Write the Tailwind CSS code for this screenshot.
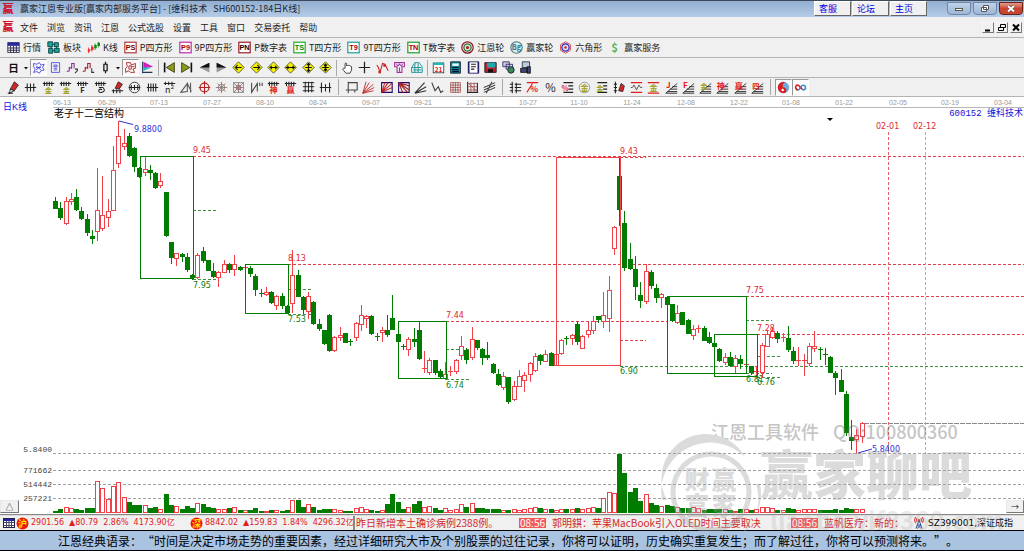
<!DOCTYPE html>
<html lang="zh-CN">

<head>
    <meta charset="UTF-8">
    <meta name="viewport" content="width=device-width, initial-scale=1.0">
    <title>赢家江恩专业版</title>
    <script src="https://cdn.jsdelivr.net/npm/@tailwindcss/browser@4"></script>
</head>

<body class="min-h-screen flex flex-col bg-[#f0f0f0] text-[9px] leading-none text-[#222] font-['Noto_Sans_CJK_SC',sans-serif] overflow-x-hidden [text-spacing-trim:space-all]">

    <!-- Title bar -->
    <header class="flex items-start h-[17px] pl-[2px] border-t border-[#3c4a5c] bg-linear-to-b from-[#92aed0] to-[#b4cce6]">
        <svg class="w-3 h-3 mt-[2px]" viewBox="0 0 12 12"><text x="6" y="10" font-size="11" font-weight="900" text-anchor="middle" fill="#d0102c">赢</text></svg>
        <h1 class="ml-[6px] leading-[15px] whitespace-pre text-[#1a2430]">赢家江恩专业版[赢家内部服务平台] - [维科技术   SH600152-184日K线]</h1>
        <nav class="ml-auto flex gap-px text-[#0000e0]">
            <a href="#" class="w-[37px] h-[15px] pl-1 leading-[13px] bg-[#f0f0f0] border border-white border-r-[#666] border-b-[#666]">客服</a>
            <a href="#" class="w-[37px] h-[15px] pl-1 leading-[13px] bg-[#f0f0f0] border border-white border-r-[#666] border-b-[#666]">论坛</a>
            <a href="#" class="w-[37px] h-[15px] pl-1 leading-[13px] bg-[#f0f0f0] border border-white border-r-[#666] border-b-[#666]">主页</a>
        </nav>
        <div class="ml-5 mr-px mt-px flex gap-[2px]">
            <button aria-label="最小化" class="w-6 h-[13px] flex items-center justify-center rounded-b border border-[#6f86a5] bg-linear-to-b from-[#bfd2e8] to-[#9db7d6]">
                <svg class="w-[10px] h-2" viewBox="0 0 10 8"><rect x="1.5" y="3.5" width="7" height="2" fill="#fff" stroke="#555" /></svg>
            </button>
            <button aria-label="还原" class="w-6 h-[13px] flex items-center justify-center rounded-b border border-[#6f86a5] bg-linear-to-b from-[#bfd2e8] to-[#9db7d6]">
                <svg class="w-[10px] h-[10px]" viewBox="0 0 10 10"><path d="M3.5 1.5h5v4h-5zM1.500 3.500h5v4h-5z" fill="#fff" stroke="#555" /></svg>
            </button>
            <button aria-label="关闭" class="w-6 h-[13px] flex items-center justify-center rounded-b border border-[#6b2019] bg-linear-to-b from-[#e09a8c] via-[#c8452f] to-[#c8452f]">
                <svg class="w-[10px] h-[10px]" viewBox="0 0 10 10"><path d="M2 2l6 5.500M8 2L2 7.500" stroke="#633" stroke-width="3" /><path d="M2 2l6 5.500M8 2L2 7.500" stroke="#fff" stroke-width="2" /></svg>
            </button>
        </div>
    </header>

    <!-- Menu -->
    <nav class="flex items-center h-[21px] pl-[2px] pr-[2px] border-b border-[#b4b4b4]">
        <svg class="w-3 h-3 mr-[6px]" viewBox="0 0 12 12"><text x="6" y="10" font-size="11" font-weight="900" text-anchor="middle" fill="#d0102c">赢</text></svg>
        <div class="flex gap-[9px]">
            <a href="#">文件</a><a href="#">浏览</a><a href="#">资讯</a><a href="#">江恩</a><a href="#">公式选股</a><a href="#">设置</a><a href="#">工具</a><a href="#">窗口</a><a href="#">交易委托</a><a href="#">帮助</a>
        </div>
        <div class="ml-auto flex gap-[2px]">
            <button aria-label="最小化窗口" class="w-3 h-[11px] border border-[#f8f8f8] border-r-[#777] border-b-[#777]"><svg class="w-full h-full" viewBox="0 0 10 9"><path d="M2 7.500h5" stroke="#000" stroke-width="2" /></svg></button>
            <button aria-label="还原窗口" class="w-3 h-[11px] border border-[#f8f8f8] border-r-[#777] border-b-[#777]"><svg class="w-full h-full" viewBox="0 0 10 9"><path d="M3.500 1.500h5v3h-5zM1.500 4.500h5v3h-5z" fill="#eee" stroke="#000" /></svg></button>
            <button aria-label="关闭窗口" class="w-3 h-[11px] border border-[#f8f8f8] border-r-[#777] border-b-[#777]"><svg class="w-full h-full" viewBox="0 0 10 9"><path d="M2 1.500l6 6M8 1.500l-6 6" stroke="#000" stroke-width="2" /></svg></button>
        </div>
    </nav>

    <!-- Toolbars, filled from the lists in the script -->
    <div id="bar-main" class="flex items-center gap-[6px] h-5 pl-[7px] border-b border-[#b4b4b4]"></div>
    <div id="bar-view" class="flex items-center h-5 pl-[5px] border-b border-[#b4b4b4]"></div>
    <div id="bar-draw" class="flex items-center h-[19px] pl-[5px] border-b border-[#b4b4b4]"></div>

    <main class="relative">
        <svg id="chart" class="block w-full bg-white" viewBox="0 97 1024 419"></svg>
        <button aria-label="展开" class="absolute left-0 bottom-[3px] w-[19px] h-[13px] bg-[#f0f0f0] border border-[#e8e8e8] border-r-[#777] border-b-[#777] text-[8px]">△</button>
        <button aria-label="向右" class="absolute right-0 bottom-[3px] w-[18px] h-[13px] bg-[#f0f0f0] border border-[#e8e8e8] border-r-[#777] border-b-[#777] text-[8px]">→</button>
    </main>

    <!-- Index quotes and news -->
    <section class="relative flex items-center h-[14px] pl-[3px] whitespace-nowrap overflow-hidden">
        <svg class="w-3 h-3" viewBox="0 0 12 12"><rect x=".5" y="1.500" width="11" height="9" fill="#fff" stroke="#224" /><path d="M1 3h10" stroke="#22a" stroke-width="2" /><path d="M1 5.500h10M1 8.500h10M3.500 4v6M6 4v6M8.500 4v6" stroke="#446" /></svg>
        <svg class="w-[13px] h-[13px] ml-px" viewBox="0 0 13 13"><circle cx="6.500" cy="6.500" r="6" fill="#f01808" /><text x="6.500" y="10" text-anchor="middle" font-size="9" font-weight="bold" fill="#ffe000">沪</text></svg>
        <p class="flex gap-[5px] ml-[2px] w-[159px] leading-[12px] text-[8px] text-[#e02020] font-['DejaVu_Sans','Noto_Sans_CJK_SC',sans-serif]">
            <span>2901.56</span><span>▲80.79</span><span>2.86%</span><span>4173.90亿</span>
        </p>
        <svg class="w-[13px] h-[13px]" viewBox="0 0 13 13"><circle cx="6.500" cy="6.500" r="6" fill="#f01808" /><text x="6.500" y="10" text-anchor="middle" font-size="9" font-weight="bold" fill="#ffe000">深</text></svg>
        <p class="flex gap-[5px] ml-[2px] w-[148px] leading-[12px] overflow-hidden text-[8px] text-[#e02020] font-['DejaVu_Sans','Noto_Sans_CJK_SC',sans-serif]">
            <span>8842.02</span><span>▲159.83</span><span>1.84%</span><span>4296.32亿</span>
        </p>
        <div class="flex items-center flex-1 h-full border-l-2 border-[#888] pl-px text-[10px] text-[#d02828]">
            <span class="w-[163px]">昨日新增本土确诊病例2388例。</span>
            <time class="px-px bg-[#f05a5a] text-white">08:56</time>
            <span class="ml-[6px] w-[239px]">郭明錤：苹果MacBook引入OLED时间主要取决</span>
            <time class="px-px bg-[#f05a5a] text-white">08:56</time>
            <span class="ml-[6px]">蓝帆医疗：新的：</span>
        </div>
        <div class="flex items-center gap-1 w-[114px] pl-1 h-full bg-[#f0f0f0]/60 text-[9px] text-black font-['DejaVu_Sans','Noto_Sans_CJK_SC',sans-serif]">
            <svg class="w-[10px] h-3" viewBox="0 0 10 12" fill="none"><path d="M5 3L2 11.500M5 3l3 8.500M3 8h4l-4 3.500M7 11.500L3.500 8" stroke="#224a9a" /><circle cx="5" cy="3" r="1" fill="#e02020" /><path d="M3 1Q2 3 3 5M7 1q1 2 0 4M1.500 0Q-.5 3 1.500 6M8.500 0q2 3 0 6" stroke="#e02020" /></svg>
            <span>SZ399001,深证成指</span>
        </div>
    </section>

    <footer class="h-[21px] border-y border-black bg-[#a9c3e0] pl-[58px] leading-[19px] text-[12px] text-black whitespace-nowrap">江恩经典语录：“时间是决定市场走势的重要因素，经过详细研究大市及个别股票的过往记录，你将可以证明，历史确实重复发生；而了解过往，你将可以预测将来。”。</footer>

    <!-- Watermark over chart and quotes -->
    <svg class="absolute top-0 left-0 w-full pointer-events-none" viewBox="0 0 1024 531" opacity=".4" fill="#a8a8a8">
        <text x="711" y="439" font-size="18" font-weight="500" fill="#707070">江恩工具软件</text>
        <text x="833" y="439" font-size="18" font-weight="500" fill="#707070">QQ:100800360</text>
        <circle cx="711" cy="492" r="38" fill="none" stroke="#a8a8a8" stroke-width="5" />
        <path d="M662 500A49 49 0 0 1 745 457A44 44 0 0 0 667 500zM760 484A49 49 0 0 1 676 527A46 46 0 0 0 756 484z" />
        <g font-size="25" font-weight="900" text-anchor="middle"><text x="697" y="489">财</text><text x="724" y="489">赢</text><text x="697" y="515">富</text><text x="724" y="515">家</text></g>
        <text x="760" y="495" font-size="53" font-weight="900">赢家聊吧</text>
        <text x="770" y="530" font-size="25" font-weight="bold" opacity=".6">liaoba.yjf8360.com</text>
    </svg>

    <script>
        // Each icon is drawn in a 16x16 box
        const box = (t, frame, ink) => `<rect x="1" y="1.500" width="14" height="13" fill="#fff" stroke="${frame}" stroke-width="1.500"/><text x="8" y="11.500" font-size="9" font-weight="bold" text-anchor="middle" font-family="Liberation Sans" fill="${ink}">${t}</text>`;
        const line = (d, c = '#222', w = 1.3) => `<path d="${d}" fill="none" stroke="${c}" stroke-width="${w}"/>`;
        const shape = (d, c, s = 'none') => `<path d="${d}" fill="${c}" stroke="${s}"/>`;
        const glyph = (t, c, x = 8, y = 14, s = 11) => `<text x="${x}" y="${y}" font-size="${s}" font-weight="bold" text-anchor="middle" fill="${c}">${t}</text>`;
        const comb = line('M1 3h14M3 1v5M6 1v5M9 1v5M12 1v5');
        const fan = line('M1 15h14M1 15L15 3M3 13h12M6 10h9M9 7h6', '#333', 1.2);
        const diamond = (d) => shape('M8 1l7 7-7 7-7-7z', '#f4f000', '#444') + line(d, '#111', 1.3);

        const icons = {
            grid: '<rect x="1" y="2" width="14" height="12" fill="#fff" stroke="#223"/>' + shape('M1 2h14v4H1z', '#2828a0') + line('M1 8.500h14M1 11.500h14M4.500 6v8M8 6v8M11.500 6v8', '#335'),
            blocks: shape('M1 1h6v6H1zM9 2h5v5H9zM2 9h5v6H2zM9 9h6v5H9z', '#18a8a0', '#033') + line('M7 4h3M5 7v3M12 7v3M7 12h3', '#044'),
            kline: line('M2 8v7M6 5v8', '#d22', 1) + line('M10 3v8M14 1v7', '#181', 1) + shape('M1 10h3v3H1zM5 7h3v4H5z', '#f22') + shape('M9 5h3v4H9zM13 2h3v4h-3z', '#181'),
            ps: box('PS', '#b04040', '#800'), p9: box('P9', '#c030b0', '#a00'), pn: box('PN', '#a02030', '#200'),
            ts: box('TS', '#20b030', '#080'), t9: box('T9', '#20a098', '#a00'), tn: box('TN', '#20a030', '#a00'),
            wheel: '<circle cx="8" cy="8" r="7" fill="#fff" stroke="#812" stroke-width="1.500"/><circle cx="8" cy="8" r="4.500" fill="#cec" stroke="#363" stroke-width="1.500"/><circle cx="8" cy="8" r="2" fill="#a23"/>',
            bigwheel: '<circle cx="8" cy="8" r="7" fill="#dfeee8" stroke="#477" stroke-width="1.300"/>' + glyph('Bg', '#287898', 8, 11, 9),
            hex: shape('M8 1l6 3.500v7L8 15l-6-3.500v-7z', '#fff', '#c22') + '<circle cx="8" cy="8" r="4.500" fill="#dde" stroke="#22b" stroke-width="1.500"/><circle cx="8" cy="8" r="1.500" fill="#c22"/>',
            dollar: glyph('$', '#58b458', 8, 13, 14),
            day: glyph('日', '#111', 8, 13, 13),
            drop: shape('M4 6h8l-4 5z', '#111'),
            web: line('M2 3l4 1 3-2 2 3 4-1-2 4 2 3-4 1-2 3-3-2-4 1 2-4-2-3zM5 6l6 5M11 6l-6 5M5 8h6', '#4848e0', 1.1),
            cup: line('M3 2h10v12H3zM6 5h4v2H6zM6 9h4M6 11h4', '#5050e0', 1.1),
            steps: line('M1 13l3-1V8l3 1V3h3v6', '#823090') + line('M11 10h3v2l-3 3', '#333'),
            steps2: line('M1 13l3-1V8l3 1V3h3v6', '#a02030') + line('M12 9v5h3', '#333'),
            candle: line('M8 1v3M8 12v3M6 4h4v8H6z', '#111', 1.500),
            face: line('M3 2h5l1 3 5-2v6l-3 1 2 4H8l-2-2-4 2V9l2-2zM6 6h3v4H6zM10 7h3', '#b02020', 1.1),
            flag: shape('M3 1l12 6-12 2z', '#d020c0') + shape('M3 8h10l-10 4z', '#20b8c0') + line('M2 1v14M2 14h12', '#235'),
            first: line('M2 2v12', '#111', 2) + shape('M14 2v12L4 8z', '#8a9a20', '#330'),
            last: line('M14 2v12', '#111', 2) + shape('M2 2v12l10-6z', '#8a9a20', '#330'),
            prev: shape('M14 2v12L2 8z', '#999') + shape('M14 2v6H2z', '#111'),
            next: shape('M2 2v12l12-6z', '#999') + shape('M2 2v6h12z', '#111'),
            d1: diamond('M4 8h8M7 5L4 8l3 3'), d2: diamond('M4 8h8M9 5l3 3-3 3'), d3: diamond('M3 8h10M6 6L4 8l2 2M10 6l2 2-2 2'),
            d4: diamond('M2 8h12M4 6l2 2-2 2M12 6l-2 2 2 2'), d5: diamond('M8 3v10M4 8h8M6 5l2-2 2 2M6 11l2 2 2-2'), d6: diamond('M8 3v10M4 8h8M6 4l2 3 2-3M6 12l2-3 2 3'),
            hand: shape('M5 9V3q1-1 2 0v3l1-1 1 1 1-1 1 1 2 1v4l-2 4H6L2 10q1-2 3-1z', '#fff', '#222'),
            plus: line('M8 1v14M1 8h14', '#222', 1.500),
            curve: line('M1 5l2 3 2 6 3-11 3 1 4 8', '#d02020', 1.300) + shape('M3 12h3v3H3zM9 4h3v3H9z', '#d02020'),
            shirt: line('M2 2h12v5h-3v7H5V7H2zM4 4l2 2 2-2 2 2 2-2M8 8v5', '#a030a0', 1.300),
            net: line('M2 8l4-6h5l4 5v7H2zM2 8h12M6 2v12M10 3v11M4 11h10', '#209898', 1.200),
            calendar: '<rect x="1.500" y="2.500" width="13" height="12" fill="#fff" stroke="#333"/>' + shape('M2 2h12v3H2z', '#20b8b8') + glyph('21', '#d22', 8, 13, 8),
            calc: shape('M2 1h12v14H2z', '#188898', '#012') + shape('M4 3h8v3H4z', '#dff') + line('M4 8h8M4 10.500h8M4 13h8', '#013', 1.500),
            list: shape('M2 1h12v14H2z', '#fff', '#115') + line('M2 1v14M14 1v14', '#226', 2) + line('M5 4h6M5 7h6M5 10h4'),
            floppy: shape('M1 2h14v12H1z', '#c02030', '#111') + shape('M4 2h10v6H4z', '#20a8b0') + shape('M5 10h6v4H5z', '#111'),
            globe: shape('M1 1h8v6H1zM5 4h8v6H5z', '#ccd', '#226') + '<circle cx="11" cy="11" r="4" fill="#3a8a50" stroke="#114"/>',
            pc: shape('M4 1h9v7H4z', '#bcd', '#224') + shape('M2 9h8v5H2zM10 7h4v8h-4z', '#447', '#111'),
            pen: shape('M4 10l5-9 5 4-5 7z', '#d02828', '#222') + shape('M4 10l5 2-6 3z', '#ddd', '#222') + line('M1 15h6', '#222', 1.5),
            vbars: line('M1 8h14M4 3v10M8 3v10M12 3v10'),
            gold: comb + glyph('金', '#a0a020', 8, 15, 9), gold2: comb + glyph('金', '#a0a020', 9, 15, 9),
            combF: comb + glyph('F', '#222', 8, 15, 9), combS: comb + line('M6 8h5q4 4-1 6-5 1-4-3 2-2 4 0'),
            pen2: shape('M5 9l4-8 5 3-4 6z', '#d02828', '#222') + line('M1 12h14M3 10v5M7 10v5M11 10v5'),
            ring: '<circle cx="8" cy="8" r="6.500" fill="none" stroke="#222"/>' + line('M1 8h14M4 5v6M8 5v6M12 5v6'),
            four: line('M1 8h14M3 3v10M6 3v10M9 3v10M12 3v10'),
            n2: line('M1 3h14M3 1v4M7 1v4M11 1v4') + '<text x="8" y="15" font-size="11" text-anchor="middle" fill="#222">n²</text>',
            tri: line('M1 14L9 3v10zM9 3l5 10M13 2v12', '#555'),
            cross: '<circle cx="8" cy="8" r="5.500" fill="none" stroke="#b22020" stroke-width="1.500"/>' + line('M8 0v16M1 8h14', '#b22020'),
            burst: line('M8 1v14M1 8h14M3 3l10 10M13 3L3 13', '#777', 1) + '<circle cx="8" cy="8" r="4" fill="none" stroke="#a66"/>',
            boxburst: line('M2 2h12v12H2zM8 2v12M2 8h12M2 2l12 12M14 2L2 14', '#777', 1) + '<circle cx="8" cy="8" r="3" fill="none" stroke="#b44"/>',
            nn: line('M2 2v12L9 3v10M12 2v4M15 2v4', '#444'),
            shen: comb + glyph('神', '#e02020', 8, 15, 10), ying: comb + glyph('赢', '#e02020', 8, 15, 10),
            ladder: line('M1 2h14M1 7h14M1 12h14M4 1v13M8 1v13M12 1v13', '#222', 1.200),
            hbar: line('M1 8h14M3 2v12M8 4v9M13 2v12'),
            rect: line('M4 2h11v9H4M4 1v14M1 11h5M12 11v3', '#444'),
            rays: line('M1 15L5 1M1 15L9 2M1 15L14 4M1 15l14-7M1 15l13-3', '#c02828', 1.1),
            boxrays: line('M2 2h13v12H2z', '#206') + line('M2 14L6 2M2 14l8-12M2 14L15 3M2 14l13-6', '#c02828'),
            boxrays2: line('M2 2h13v12H2z', '#206') + line('M2 2l13 4M2 2l13 9M2 2l11 12M2 2l5 12', '#a02828', 1.500),
            lines: line('M1 15L13 2M1 15L15 7M1 15l14-3', '#333'),
            vee: line('M1 2l4 10 4-5 3 7 3-2', '#333'),
            mesh: line('M2 2h12v12H2zM5 2v12M8 2v12M11 2v12M2 5h12M2 8h12M2 11h12', '#a05050', 1),
            mesh2: line('M2 1v14M14 2v12M2 14h13', '#222') + line('M2 3h12M2 7h12M2 11h12M6 2v12M10 2v12M3 3l11 10', '#a05050', 1),
            para: line('M1 8l14-6M1 11l14-6M1 14l14-6M4 15l7-14', '#444'),
            rows: line('M4 1v14M9 2v13M1 4h4M7 4h8M1 8h4M7 8h8M1 12h4M7 12h8', '#222', 1.300),
            pctline: line('M1 2h14M1 14L8 3', '#e02020') + glyph('%', '#e02020', 10, 14, 10),
            pct: '<text x="8" y="13" font-size="14" text-anchor="middle" fill="#222">%</text>',
            pctrows: line('M3 2h12M9 6h6M9 10h6M3 14h12') + glyph('%', '#e02020', 5, 12, 9),
            goldring: '<circle cx="8" cy="8" r="6.500" fill="none" stroke="#888"/>' + glyph('金', '#a0a020', 8, 12, 10),
            goldrows: line('M3 2h12M10 6h5M10 10h5M3 14h12') + glyph('金', '#a0a020', 6, 12, 9),
            penbar: line('M3 1v14M1 4h4M1 8h4M1 12h4') + shape('M7 12l3-9 4 3-2 7z', '#d02828', '#222'),
            wave: line('M1 2h14M1 14h14', '#e02020', 1.300) + line('M1 8h2l2-3 3 6 3-6 2 3h2', '#444', 1.1),
            goldbars: line('M1 2h14M1 15h14', '#e02020', 1.500) + glyph('金', '#a0a020', 8, 12, 10),
            fanJ: fan + glyph('J', '#e02020', 4, 9, 10), fanF: fan + glyph('F', '#e02020', 4, 9, 10), fanG: fan + glyph('金', '#a0a020', 6, 10, 9),
            fanS: fan + glyph('神', '#e02020', 6, 10, 10), fanY: fan + glyph('赢', '#e02020', 6, 10, 10), fan4: fan + glyph('四', '#e02020', 6, 10, 9),
            yin: '<circle cx="8" cy="8" r="7" fill="#70a8e0"/>' + shape('M8 1a7 7 0 0 0 0 14 3.500 3.500 0 0 0 0-7 3.500 3.500 0 0 1 3-6z', '#d82020') + '<circle cx="7" cy="11" r="1.500" fill="#fff"/>',
            inf: line('M8 8C6 5 4 4 2.500 6S3 11 5 11', '#d02020', 2) + line('M8 8c2-3 5-4 6-1s-2 5-4 3', '#4888c8', 2) + line('M5 11c1 0 2-1 3-3', '#4888c8', 2) + line('M8 8l2 2', '#d02020', 2)
        };
        const svg = (name, cls) => `<svg class="${cls}" viewBox="0 0 16 16">${icons[name]}</svg>`;

        const mainItems = [['grid', '行情'], ['blocks', '板块'], ['kline', 'K线'], ['ps', 'P四方形'], ['p9', '9P四方形'], ['pn', 'P数字表'], ['ts', 'T四方形'],
        ['t9', '9T四方形'], ['tn', 'T数字表'], ['wheel', '江恩轮'], ['bigwheel', '赢家轮'], ['hex', '六角形'], ['dollar', '赢家服务']];
        document.getElementById('bar-main').innerHTML = mainItems.map(([icon, label]) =>
            `<button class="flex items-center gap-[3px] whitespace-nowrap">${svg(icon, 'w-[13px] h-[13px]')}${label}</button>`).join('');

        // A group is a fixed run of tool buttons; '*' marks a pressed one
        const group = (names, cls) => `<div class="flex items-center justify-between ${cls}">` + names.split(' ').map(n => {
            const on = n[0] === '*';
            const name = on ? n.slice(1) : n;
            return `<button aria-label="${name}" class="flex items-center justify-center h-[17px] ${on ? 'w-[17px] bg-[#fafafa] border border-[#999] border-r-white border-b-white' : name === 'drop' ? 'w-2' : 'w-[17px]'}">${svg(name, name === 'drop' ? 'w-2 h-2' : 'w-[13px] h-[13px]')}</button>`;
        }).join('') + '</div>';
        const sep = '<span class="w-px h-4 mx-[3px] bg-[#a8a8a8]"></span>';
        const thinSep = '<span class="w-px h-4 mx-[2px] bg-[#a8a8a8]"></span>';
        const wideSep = '<span class="w-px h-4 mx-1 bg-[#a8a8a8]"></span>';

        document.getElementById('bar-view').innerHTML =
            group('day drop *web cup steps steps2 candle drop *face flag', 'w-[151px]') + thinSep +
            group('first last prev next d1 d2 d3 d4 d5 d6', 'w-[173px]') + thinSep +
            group('hand plus curve shirt net', 'w-[86px]') + thinSep +
            group('calendar calc list floppy globe pc', 'w-[104px]');
        document.getElementById('bar-draw').innerHTML =
            group('pen vbars gold gold2 combF combS pen2 ring four n2 tri cross burst boxburst nn shen ying ladder hbar', 'w-[329px]') + wideSep +
            group('rect rays boxrays boxrays2 lines vee mesh mesh2 para', 'w-[155px]') + wideSep +
            group('rows pctline pct pctrows goldring goldrows penbar wave goldbars fanJ fanF fanG fanS fanY fan4', 'w-[259px]') + wideSep +
            group('*yin *inf', 'w-[34px]');

        // Candles: direction, high, body top, body bottom, low
        const candles = `g197,201,208,208 g202,208,217,219 r197,201,223,224 r193,199,201,204 g189,197,209,210 g207,211,218,219 g214,219,232,235 g230,236,238,243
            r168,210,231,240 r176,215,228,230 r199,211,217,226 r146,170,210,210 r121,136,163,167 r129,143,146,149 g133,136,155,156 g147,148,166,171
            g167,168,176,177 r157,169,172,175 g165,170,172,179 g172,173,187,188 r173,181,185,187 g192,192,235,236 g242,242,257,263 r253,253,258,265
            g253,254,256,261 g253,257,269,271 g274,275,277,279 r253,255,277,278 g247,251,260,262 g260,260,270,270 g263,271,276,277 r271,272,277,286
            r260,264,272,272 g263,264,269,272 r255,264,269,275 g266,267,269,270 r267,267,267,267 g266,268,273,276 g274,276,289,295 g289,293,293,296
            r287,292,294,295 g291,292,302,303 r295,296,305,309 g293,296,305,308 g305,306,312,313 r250,275,303,312 g270,275,296,296 g296,297,309,313
            r292,296,311,318 g301,302,323,324 g319,324,328,330 g330,330,343,344 g314,315,350,351 r336,337,350,351 r327,335,337,340 g333,333,342,342
            g339,341,341,345 r322,323,337,340 r305,315,324,330 r315,316,318,327 g315,316,333,334 g333,336,336,340 r327,330,332,341 g315,330,334,336
            g295,318,329,329 g334,334,341,341 g344,346,346,349 r337,339,349,355 g328,339,341,346 g322,330,358,359 r351,368,368,372 r358,360,372,374
            g360,360,372,374 g369,371,376,377 r362,374,378,379 r366,371,371,375 r359,360,371,373 r336,346,355,359 g348,350,359,363 r327,339,357,359
            g340,340,347,349 g348,349,357,364 g342,355,357,359 g363,364,372,373 g369,374,384,385 r372,376,387,389 g377,377,401,403 r381,386,399,400
            r370,376,386,386 r372,375,380,391 r362,363,374,381 r353,356,370,371 g354,355,360,364 r350,354,361,361 g352,353,365,365 r354,354,365,365
            r339,340,353,354 g336,338,338,344 r334,335,338,344 g321,324,341,344 r335,336,348,348 r322,330,334,337 r316,321,330,333 g316,316,319,322
            r292,315,321,327 r276,290,318,331 r226,227,248,254 g158,176,209,225 g211,223,267,270 g243,259,268,269 g256,269,286,299 g282,295,300,307
            r264,271,301,303 g270,272,285,288 g284,288,297,302 r293,294,297,307 g296,297,304,304 g304,304,320,321 r305,313,322,323 g312,312,324,324
            g319,320,333,333 r325,329,335,339 r325,328,328,332 g326,328,340,340 g332,337,342,343 g342,343,346,350 g348,349,360,361 r353,357,362,364
            g352,357,365,366 r355,358,366,373 g355,359,363,368 r359,364,364,370 g366,366,372,374 r366,371,371,377 r343,345,372,377 r330,334,346,346
            r327,331,337,338 g331,333,338,342 r333,337,337,341 g326,338,349,351 g347,351,360,363 r347,360,360,365 r354,360,360,375 r343,346,363,365
            r331,346,348,351 g347,349,349,359 g348,354,354,364 g356,357,372,372 g371,373,377,394 g369,380,391,391 g391,394,432,435 g420,437,440,449
            r429,435,439,453 r422,423,436,442`.split(/\s+/).map(c => [c[0], ...c.slice(1).split(',').map(Number)]);
        const volumes = [2, 4, 6, 5, 4, 3, 5, 5, 32, 25, 14, 27, 31, 16, 11, 8, 8, 8, 5, 6, 4, 19, 8, 7, 4, 7, 5, 10, 9, 6, 5, 4, 4, 5, 6, 3, 3, 3, 5, 2, 2, 3, 3, 2, 3, 13, 13, 6, 9, 6, 3, 4, 4, 4, 3,
            2, 2, 5, 6, 4, 3, 2, 3, 9, 19, 11, 4, 6, 9, 12, 6, 7, 5, 3, 5, 3, 4, 9, 6, 10, 5, 5, 4, 4, 4, 3, 3, 4, 3, 4, 5, 6, 5, 4, 4, 3, 4, 4, 4, 5, 4, 5, 6, 5, 15, 21, 20, 59, 40, 21, 25, 12, 19, 10, 8, 7,
            8, 7, 6, 5, 5, 6, 5, 3, 4, 4, 4, 4, 3, 2, 4, 4, 3, 4, 6, 6, 5, 3, 3, 5, 4, 3, 4, 4, 4, 3, 3, 3, 4, 3, 5, 4, 4, 4];

        const RED = '#f04048', GREEN = '#007c00';
        const out = [];
        const seg = (x1, y1, x2, y2, c, dash = '') => out.push(`<path d="M${x1} ${y1}L${x2} ${y2}" stroke="${c}" stroke-dasharray="${dash}" fill="none"/>`);
        const label = (x, y, t, c, size = 8, font = 'DejaVu Sans', anchor = 'start') =>
            out.push(`<text x="${x}" y="${y}" font-size="${size}" font-family="${font}, Noto Sans CJK SC, sans-serif" fill="${c}" text-anchor="${anchor}">${t}</text>`);

        // Date scale
        const dates = ['06-13', '06-29', '07-13', '07-27', '08-10', '08-24', '09-07', '09-21', '10-13', '10-27', '11-10', '11-24', '12-08', '12-22', '01-08', '01-22', '02-05', '02-19', '03-04'];
        const dateX = [62, 107, 159, 212, 265, 318, 371, 423, 475, 528, 579, 632, 686, 739, 791, 844, 898, 950, 1003];
        dates.forEach((d, i) => label(dateX[i], 105, d, '#999', 7, 'Liberation Sans', 'middle'));
        seg(53, 107.5, 1024, 107.5, '#b8b8b8');

        // Value scale
        [['5.8400', 453], ['771662', 470], ['514442', 484], ['257221', 498]].forEach(([t, y], i) => {
            label(52, i ? y + 3 : y - 1, t, '#444', 8, 'Liberation Mono', 'end');
            seg(53, y + .5, 1024, y + .5, '#a0a0a0', '3 2');
        });
        seg(0, 514.5, 1024, 514.5, '#888');
        seg(0, 515.5, 1024, 515.5, '#ddd');

        // Levels
        [[193, 156.5, 1024], [288, 264.5, 1024], [446, 321.5, 667], [746, 296.5, 1024], [757, 334.5, 1024], [620, 157.5, 646], [620, 340.5, 646]].forEach(([a, y, b]) => seg(a, y, b, y, '#e04048', '3 2'));
        [[193, 210.5, 218], [193, 279.5, 218], [288, 289.5, 313], [288, 314.5, 313], [446, 349.5, 471], [446, 379.5, 471], [620, 366.5, 1024], [746, 320.5, 772], [746, 373.5, 772], [757, 356.5, 782], [757, 377.5, 782]]
            .forEach(([a, y, b]) => seg(a, y, b, y, '#409040', '3 2'));
        seg(864, 423.5, 1024, 423.5, '#888', '5 1');
        seg(888.5, 132, 888.5, 453, '#e86068', '3 2');
        seg(925.5, 132, 925.5, 453, '#80b8e8', '3 2');

        candles.forEach(([dir, hi, top, bot, lo], i) => {
            const x = Math.round(55 + i * 5.273) + .5;
            const c = dir === 'r' ? RED : GREEN;
            if (bot - top < 1) {
                seg(x, hi, x, lo + 1, c);
                seg(x - 2.5, top + .5, x + 2.5, top + .5, c);
            } else if (dir === 'r') {
                seg(x, hi, x, top, c);
                seg(x, bot, x, lo + 1, c);
                out.push(`<rect x="${x - 2}" y="${top + .5}" width="4" height="${bot - top}" fill="#fff" stroke="${c}"/>`);
            } else {
                seg(x, hi, x, lo + 1, c);
                out.push(`<rect x="${x - 2.5}" y="${top}" width="5" height="${bot - top + 1}" fill="${c}"/>`);
            }
            const v = volumes[i];
            out.push(dir === 'r'
                ? `<rect x="${x - 2}" y="${513 - v + .5}" width="4" height="${v - 1}" fill="#fff" stroke="${c}"/>`
                : `<rect x="${x - 2.5}" y="${513 - v}" width="5" height="${v}" fill="${c}"/>`);
        });

        // Gann boxes
        [[140, 156, 193, 278, GREEN], [245, 264, 288, 313, GREEN], [398, 321, 446, 378, GREEN], [556, 157, 620, 365, RED], [667, 296, 746, 373, GREEN], [714, 334, 757, 376, GREEN]]
            .forEach(([x1, y1, x2, y2, c]) => out.push(`<rect x="${x1 + .5}" y="${y1 + .5}" width="${x2 - x1}" height="${y2 - y1}" fill="none" stroke="${c}"/>`));

        [[193, 153, '9.45'], [288, 261, '8.13'], [446, 318, '7.44'], [620, 154, '9.43'], [746, 293, '7.75'], [757, 331, '7.28']].forEach(([x, y, t]) => label(x, y, t, '#e02830'));
        [[193, 288, '7.95'], [288, 322, '7.53'], [446, 388, '6.74'], [620, 374, '6.90'], [746, 382, '6.81'], [757, 385, '6.76']].forEach(([x, y, t]) => label(x, y, t, '#108010'));
        label(876, 129, '02-01', '#e02830');
        label(913, 129, '02-12', '#e02830');
        seg(119, 121, 133, 124.5, '#3030d8');
        label(134, 132, '9.8800', '#3030d8');
        seg(858, 453, 872, 449, '#3030d8');
        label(872, 452, '5.8400', '#3030d8');
        out.push('<path d="M827 118h6l-3 3z" fill="#000"/>');
        label(3, 110, '日K线', '#1010d8', 9, 'Liberation Sans');
        label(54, 117, '老子十二宫结构', '#000', 10, 'Liberation Sans');
        label(1023, 116, '600152 维科技术', '#1010d8', 9, 'Liberation Mono', 'end');
        document.getElementById('chart').innerHTML = out.join('');
    </script>
</body>

</html>
